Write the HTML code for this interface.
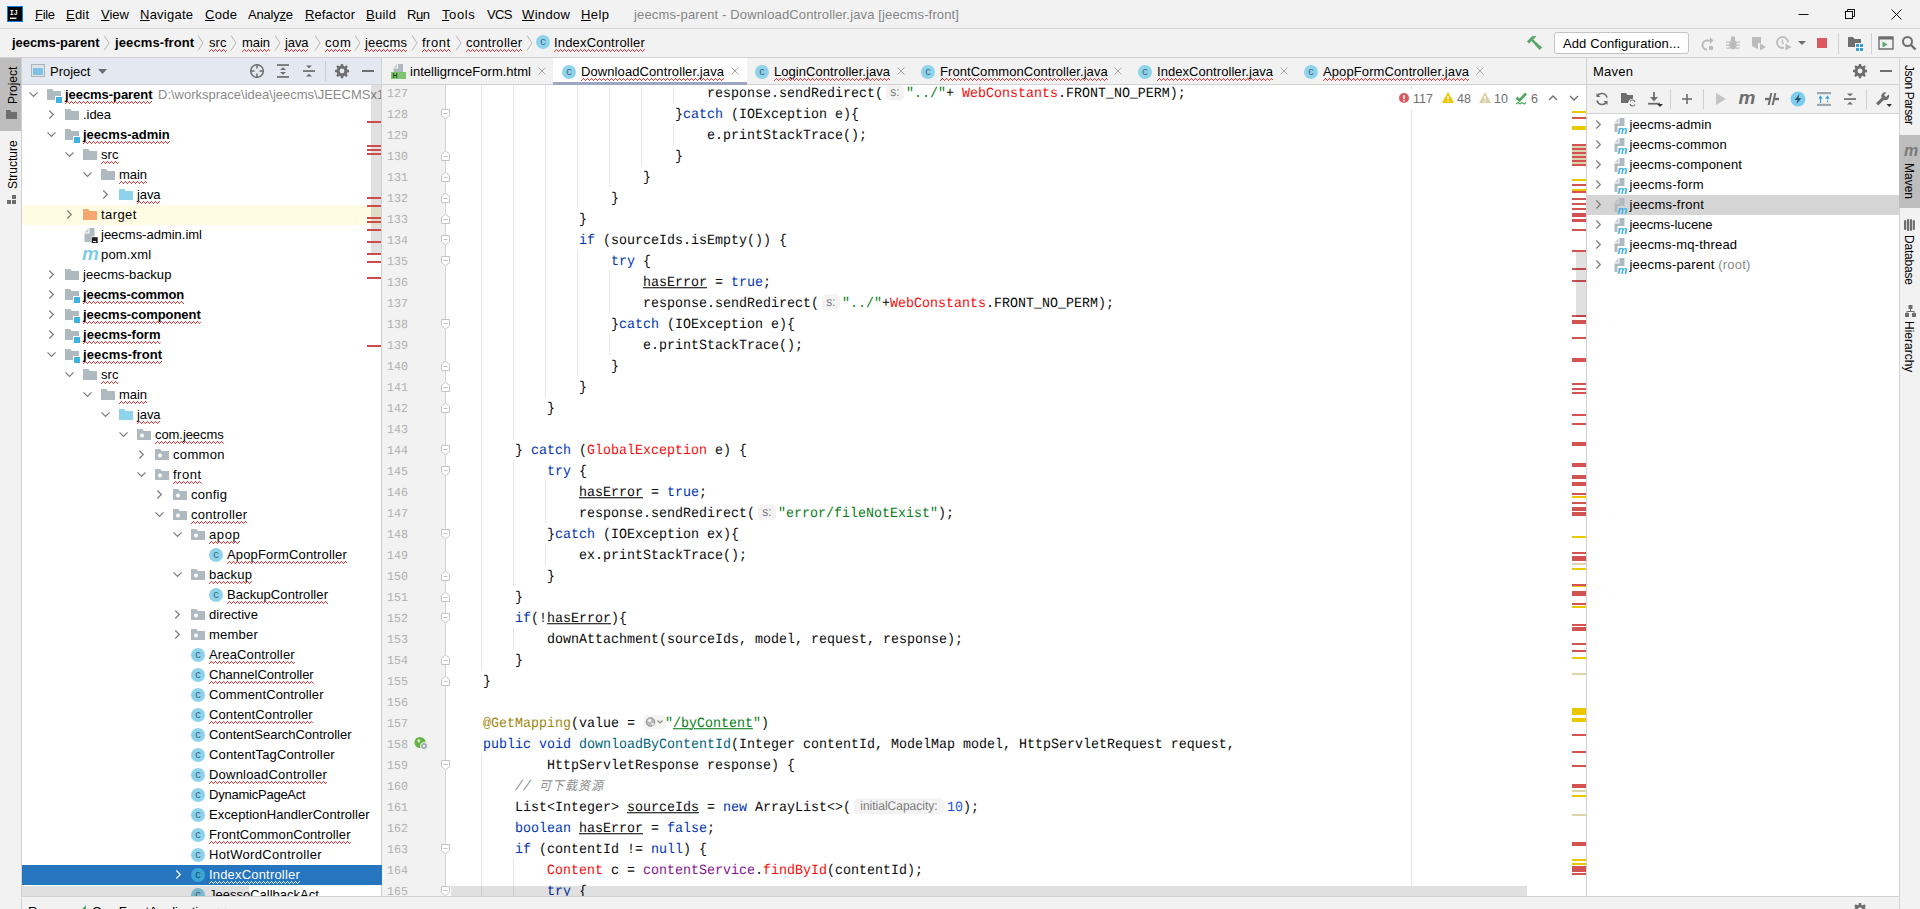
<!DOCTYPE html><html><head><meta charset="utf-8"><title>jeecms-parent</title><style>
*{box-sizing:border-box;margin:0;padding:0}
html,body{width:1920px;height:909px;overflow:hidden;background:#f2f2f2}
body{font-family:"Liberation Sans", "Noto Sans CJK SC", sans-serif;font-size:13px;color:#000;position:relative}
.abs{position:absolute}
.t{position:absolute;white-space:pre;line-height:20px;height:20px}
.b{font-weight:bold}
.w{}
.mn u{text-decoration:underline;text-underline-offset:1px}
.code{text-rendering:geometricPrecision;transform:scaleY(1.06);position:absolute;white-space:pre;font-family:"Liberation Mono", "Noto Sans CJK SC", monospace;font-size:13.333px;line-height:21px;height:21px;color:#080808;left:451px}
.ln{text-rendering:geometricPrecision;transform:scaleY(1.06);position:absolute;left:387px;font-family:"Liberation Mono", "Noto Sans CJK SC", monospace;font-size:11.667px;line-height:21px;height:21px;color:#b0b0b0;white-space:pre}
.k{color:#0033b3}.s{color:#067d17}.r{color:#f50a0a}.a{color:#9e880d}.m{color:#00627a}.f{color:#871094}.n{color:#1750eb}.c{color:#8c8c8c;font-style:italic}
.u{text-decoration:underline;text-decoration-thickness:1px;text-underline-offset:1px}
.hint{display:inline-block;font-family:"Liberation Sans", "Noto Sans CJK SC", sans-serif;font-size:12px;color:#7a7a7a;background:#f3f3f3;border-radius:4px;height:15px;line-height:15px;vertical-align:1px;text-align:center}
.row{position:absolute;left:22px;width:359px;height:20px}
</style></head><body><svg width="0" height="0" style="position:absolute"><defs><pattern id="wv" width="4" height="3" patternUnits="userSpaceOnUse"><g fill="#f23535" shape-rendering="crispEdges"><rect x="0" y="2" width="1" height="1"/><rect x="1" y="1" width="1" height="1"/><rect x="2" y="0" width="1" height="1"/><rect x="3" y="1" width="1" height="1"/></g></pattern><pattern id="wv2" width="4" height="3" patternUnits="userSpaceOnUse"><g fill="#e6eff9" shape-rendering="crispEdges"><rect x="0" y="2" width="1" height="1"/><rect x="1" y="1" width="1" height="1"/><rect x="2" y="0" width="1" height="1"/><rect x="3" y="1" width="1" height="1"/></g></pattern></defs></svg>
<div class="abs" style="left:0px;top:0px;width:1920px;height:28px;background:#f2f2f2;"></div>
<div class="abs" style="left:0px;top:28px;width:1920px;height:1px;background:#d4d4d4;"></div>
<div class="abs" style="left:0px;top:29px;width:1920px;height:28px;background:#f2f2f2;"></div>
<div class="abs" style="left:0px;top:57px;width:1920px;height:1px;background:#d1d1d1;"></div>
<svg class="abs" style="left:7px;top:6px" width="16" height="16" viewBox="0 0 16 16"><rect width="16" height="16" fill="#087cfa"/><rect x="1" y="1" width="14" height="14" fill="#000"/><rect x="3" y="11.6" width="6.5" height="1.3" fill="#fff"/><text x="2.8" y="9" font-family="Liberation Mono" font-weight="bold" font-size="7.5" textLength="8" lengthAdjust="spacingAndGlyphs" fill="#fff">IJ</text></svg>
<div class="t mn" style="left:35px;top:5px;letter-spacing:-0.318px;"><u>F</u>ile</div>
<div class="t mn" style="left:66px;top:5px;letter-spacing:0.198px;"><u>E</u>dit</div>
<div class="t mn" style="left:101px;top:5px;letter-spacing:0.016px;"><u>V</u>iew</div>
<div class="t mn" style="left:140px;top:5px;letter-spacing:0.241px;"><u>N</u>avigate</div>
<div class="t mn" style="left:205px;top:5px;letter-spacing:0.307px;"><u>C</u>ode</div>
<div class="t mn" style="left:248px;top:5px;letter-spacing:-0.208px;">Analy<u>z</u>e</div>
<div class="t mn" style="left:305px;top:5px;letter-spacing:0.123px;"><u>R</u>efactor</div>
<div class="t mn" style="left:366px;top:5px;letter-spacing:0.270px;"><u>B</u>uild</div>
<div class="t mn" style="left:407px;top:5px;letter-spacing:-0.430px;">R<u>u</u>n</div>
<div class="t mn" style="left:442px;top:5px;letter-spacing:0.600px;"><u>T</u>ools</div>
<div class="t mn" style="left:487px;top:5px;letter-spacing:-0.600px;">VCS</div>
<div class="t mn" style="left:522px;top:5px;letter-spacing:0.350px;"><u>W</u>indow</div>
<div class="t mn" style="left:581px;top:5px;letter-spacing:0.417px;"><u>H</u>elp</div>
<div class="t " style="left:634px;top:4.5px;color:#858585;letter-spacing:0.147px;">jeecms-parent - DownloadController.java [jeecms-front]</div>
<svg class="abs" style="left:1780px;top:0" width="140" height="28" viewBox="0 0 140 28" fill="none" stroke="#111" stroke-width="1"><path d="M18.5 14.5h10"/><rect x="65.5" y="11.5" width="7" height="7"/><path d="M67.500 11.500v-2h7v7h-2"/><path d="M111.500 9.500l10 10M121.500 9.500l-10 10"/></svg>
<div class="t b " style="left:12px;top:33px;letter-spacing:-0.055px;">jeecms-parent</div>
<div class="t b " style="left:115px;top:33px;letter-spacing:0.106px;">jeecms-front</div>
<div class="t w" style="left:209px;top:33px;letter-spacing:0.078px;">src<svg style="position:absolute;left:0;top:16px;width:100%;height:3px"><rect width="100%" height="3" fill="url(#wv)"/></svg></div>
<div class="t w" style="left:242px;top:33px;letter-spacing:-0.062px;">main<svg style="position:absolute;left:0;top:16px;width:100%;height:3px"><rect width="100%" height="3" fill="url(#wv)"/></svg></div>
<div class="t w" style="left:285px;top:33px;letter-spacing:-0.120px;">java<svg style="position:absolute;left:0;top:16px;width:100%;height:3px"><rect width="100%" height="3" fill="url(#wv)"/></svg></div>
<div class="t w" style="left:325px;top:33px;letter-spacing:0.600px;">com<svg style="position:absolute;left:0;top:16px;width:100%;height:3px"><rect width="100%" height="3" fill="url(#wv)"/></svg></div>
<div class="t w" style="left:365px;top:33px;letter-spacing:0.163px;">jeecms<svg style="position:absolute;left:0;top:16px;width:100%;height:3px"><rect width="100%" height="3" fill="url(#wv)"/></svg></div>
<div class="t w" style="left:422px;top:33px;letter-spacing:0.496px;">front<svg style="position:absolute;left:0;top:16px;width:100%;height:3px"><rect width="100%" height="3" fill="url(#wv)"/></svg></div>
<div class="t w" style="left:466px;top:33px;letter-spacing:0.292px;">controller<svg style="position:absolute;left:0;top:16px;width:100%;height:3px"><rect width="100%" height="3" fill="url(#wv)"/></svg></div>
<div class="t w" style="left:554px;top:33px;letter-spacing:0.182px;">IndexController<svg style="position:absolute;left:0;top:16px;width:100%;height:3px"><rect width="100%" height="3" fill="url(#wv)"/></svg></div>
<svg class="abs" style="left:103px;top:35px" width="7" height="16" viewBox="0 0 7 16" fill="none" stroke="#b4b4b4" stroke-width="1"><path d="M1 .5l5 7.5-5 7.5"/></svg>
<svg class="abs" style="left:197px;top:35px" width="7" height="16" viewBox="0 0 7 16" fill="none" stroke="#b4b4b4" stroke-width="1"><path d="M1 .5l5 7.5-5 7.5"/></svg>
<svg class="abs" style="left:230px;top:35px" width="7" height="16" viewBox="0 0 7 16" fill="none" stroke="#b4b4b4" stroke-width="1"><path d="M1 .5l5 7.5-5 7.5"/></svg>
<svg class="abs" style="left:274px;top:35px" width="7" height="16" viewBox="0 0 7 16" fill="none" stroke="#b4b4b4" stroke-width="1"><path d="M1 .5l5 7.5-5 7.5"/></svg>
<svg class="abs" style="left:314px;top:35px" width="7" height="16" viewBox="0 0 7 16" fill="none" stroke="#b4b4b4" stroke-width="1"><path d="M1 .5l5 7.5-5 7.5"/></svg>
<svg class="abs" style="left:354px;top:35px" width="7" height="16" viewBox="0 0 7 16" fill="none" stroke="#b4b4b4" stroke-width="1"><path d="M1 .5l5 7.5-5 7.5"/></svg>
<svg class="abs" style="left:411px;top:35px" width="7" height="16" viewBox="0 0 7 16" fill="none" stroke="#b4b4b4" stroke-width="1"><path d="M1 .5l5 7.5-5 7.5"/></svg>
<svg class="abs" style="left:455px;top:35px" width="7" height="16" viewBox="0 0 7 16" fill="none" stroke="#b4b4b4" stroke-width="1"><path d="M1 .5l5 7.5-5 7.5"/></svg>
<svg class="abs" style="left:526px;top:35px" width="7" height="16" viewBox="0 0 7 16" fill="none" stroke="#b4b4b4" stroke-width="1"><path d="M1 .5l5 7.5-5 7.5"/></svg>
<svg class="abs" style="left:536px;top:35px" width="14" height="14" viewBox="0 0 14 14"><circle cx="7" cy="7" r="7" fill="#8ed3ec"/><text x="7" y="10.300" text-anchor="middle" font-family="Liberation Sans" font-size="11" fill="#45687a">c</text></svg>
<div class="abs" style="left:0px;top:58px;width:21px;height:851px;background:#f2f2f2;"></div>
<div class="abs" style="left:21px;top:58px;width:1px;height:851px;background:#d1d1d1;"></div>
<div class="abs" style="left:0px;top:58px;width:21px;height:73px;background:#bdbdbd;"></div>
<div class="abs" style="left:2.500px;top:85px;width:20px;height:0"><div style="position:absolute;white-space:pre;transform:rotate(-90deg);transform-origin:0 0;left:0;top:19px;width:40px;height:20px;line-height:20px;font-size:12px">Project</div></div>
<svg class="abs" style="left:6px;top:110px" width="11" height="9" viewBox="0 0 11 9"><path d="M0 0h4l1.500 2H11v7H0z" fill="#6e6e6e"/></svg>
<div class="abs" style="left:2.500px;top:170px;width:20px;height:0"><div style="position:absolute;white-space:pre;transform:rotate(-90deg);transform-origin:0 0;left:0;top:19px;width:50px;height:20px;line-height:20px;font-size:12px">Structure</div></div>
<svg class="abs" style="left:7px;top:195px" width="9" height="9" viewBox="0 0 9 9" fill="#6e6e6e"><rect x="5" y="0" width="4" height="4"/><rect x="0" y="5" width="4" height="4"/><rect x="5" y="5" width="4" height="4"/></svg>
<div class="abs" style="left:22px;top:58px;width:359px;height:26px;background:#e4e8f0;"></div>
<div class="abs" style="left:22px;top:84px;width:359px;height:1px;background:#d1d1d1;"></div>
<div class="abs" style="left:22px;top:85px;width:359px;height:811px;background:#fff;"></div>
<div class="abs" style="left:381px;top:58px;width:1px;height:838px;background:#d1d1d1;"></div>
<svg class="abs" style="left:31px;top:64px" width="14" height="14" viewBox="0 0 14 14"><rect x="0.5" y="0.5" width="13" height="12" fill="#dfe3e8" stroke="#aab3bb"/><rect x="2" y="4" width="10" height="7" fill="#7ec3e6"/></svg>
<div class="t " style="left:50px;top:62px;">Project</div>
<svg class="abs" style="left:98px;top:69px" width="9" height="5" viewBox="0 0 9 5"><path d="M0 0h9L4.500 5z" fill="#6e6e6e"/></svg>
<div class="abs" style="left:22px;top:85px;width:359px;height:811px;overflow:hidden"><div class="abs" style="left:-22px;top:-85px">
<svg class="abs" style="left:27.5px;top:91px" width="11" height="7" viewBox="0 0 11 7" fill="none" stroke="#7a7a7a" stroke-width="1.200"><path d="M1.500 1.300l4 4L9.500 1.300"/></svg>
<svg class="abs" style="left:46px;top:87px" width="16" height="16" viewBox="0 0 16 16"><path d="M1 2h5.200l1.600 2H15v9H1z" fill="#aeb9c0"/><rect x="9" y="9" width="7" height="7" fill="#fff"/><rect x="10" y="10" width="6" height="6" fill="#3fb3e0"/></svg>
<div class="t b w" style="left:65px;top:85px;letter-spacing:-0.055px;">jeecms-parent<svg style="position:absolute;left:0;top:16px;width:100%;height:3px"><rect width="100%" height="3" fill="url(#wv)"/></svg></div>
<div class="t " style="left:158px;top:85px;color:#8a8a8a;">D:\worksprace\idea\jeecms\JEECMSx1</div>
<svg class="abs" style="left:48px;top:108.5px" width="7" height="11" viewBox="0 0 7 11" fill="none" stroke="#7a7a7a" stroke-width="1.200"><path d="M1.300 1.500l4 4L1.300 9.500"/></svg>
<svg class="abs" style="left:64px;top:107px" width="16" height="16" viewBox="0 0 16 16"><path d="M1 2h5.200l1.600 2H15v9H1z" fill="#aeb9c0"/></svg>
<div class="t " style="left:83px;top:105px;letter-spacing:-0.051px;">.idea</div>
<svg class="abs" style="left:45.5px;top:131px" width="11" height="7" viewBox="0 0 11 7" fill="none" stroke="#7a7a7a" stroke-width="1.200"><path d="M1.500 1.300l4 4L9.500 1.300"/></svg>
<svg class="abs" style="left:64px;top:127px" width="16" height="16" viewBox="0 0 16 16"><path d="M1 2h5.200l1.600 2H15v9H1z" fill="#aeb9c0"/><rect x="9" y="9" width="7" height="7" fill="#fff"/><rect x="10" y="10" width="6" height="6" fill="#3fb3e0"/></svg>
<div class="t b w" style="left:83px;top:125px;letter-spacing:0.009px;">jeecms-admin<svg style="position:absolute;left:0;top:16px;width:100%;height:3px"><rect width="100%" height="3" fill="url(#wv)"/></svg></div>
<svg class="abs" style="left:63.5px;top:151px" width="11" height="7" viewBox="0 0 11 7" fill="none" stroke="#7a7a7a" stroke-width="1.200"><path d="M1.500 1.300l4 4L9.500 1.300"/></svg>
<svg class="abs" style="left:82px;top:147px" width="16" height="16" viewBox="0 0 16 16"><path d="M1 2h5.200l1.600 2H15v9H1z" fill="#aeb9c0"/></svg>
<div class="t w" style="left:101px;top:145px;letter-spacing:0.078px;">src<svg style="position:absolute;left:0;top:16px;width:100%;height:3px"><rect width="100%" height="3" fill="url(#wv)"/></svg></div>
<svg class="abs" style="left:81.5px;top:171px" width="11" height="7" viewBox="0 0 11 7" fill="none" stroke="#7a7a7a" stroke-width="1.200"><path d="M1.500 1.300l4 4L9.500 1.300"/></svg>
<svg class="abs" style="left:100px;top:167px" width="16" height="16" viewBox="0 0 16 16"><path d="M1 2h5.200l1.600 2H15v9H1z" fill="#aeb9c0"/></svg>
<div class="t w" style="left:119px;top:165px;letter-spacing:-0.062px;">main<svg style="position:absolute;left:0;top:16px;width:100%;height:3px"><rect width="100%" height="3" fill="url(#wv)"/></svg></div>
<svg class="abs" style="left:102px;top:188.5px" width="7" height="11" viewBox="0 0 7 11" fill="none" stroke="#7a7a7a" stroke-width="1.200"><path d="M1.300 1.500l4 4L1.300 9.500"/></svg>
<svg class="abs" style="left:118px;top:187px" width="16" height="16" viewBox="0 0 16 16"><path d="M1 2h5.200l1.600 2H15v9H1z" fill="#8ed3ec"/></svg>
<div class="t w" style="left:137px;top:185px;letter-spacing:-0.120px;">java<svg style="position:absolute;left:0;top:16px;width:100%;height:3px"><rect width="100%" height="3" fill="url(#wv)"/></svg></div>
<div class="abs" style="left:22px;top:205px;width:359px;height:20px;background:#fffce3;"></div>
<svg class="abs" style="left:66px;top:208.5px" width="7" height="11" viewBox="0 0 7 11" fill="none" stroke="#7a7a7a" stroke-width="1.200"><path d="M1.300 1.500l4 4L1.300 9.500"/></svg>
<svg class="abs" style="left:82px;top:207px" width="16" height="16" viewBox="0 0 16 16"><path d="M1 2h5.200l1.600 2H15v9H1z" fill="#f4a870"/></svg>
<div class="t " style="left:101px;top:205px;letter-spacing:0.410px;">target</div>
<svg class="abs" style="left:84px;top:228px" width="16" height="16" viewBox="0 0 16 16"><path d="M5.500 0h5v14H.500V5.500h5z" fill="#aeb9c0"/><path d="M4.500 0v4.500H.500z" fill="#aeb9c0" opacity=".700"/><rect x="7" y="8.500" width="8" height="7.500" fill="#fff"/><rect x="7.700" y="9.200" width="6" height="5.800" fill="#231f20"/><rect x="9" y="13" width="3" height="1" fill="#fff"/></svg>
<div class="t " style="left:101px;top:225px;letter-spacing:-0.009px;">jeecms-admin.iml</div>
<div class="t b" style="left:82px;top:243.5px;color:#7fcbe8;font-style:italic;font-size:19px;line-height:20px">m</div>
<div class="t " style="left:101px;top:245px;letter-spacing:0.179px;">pom.xml</div>
<svg class="abs" style="left:48px;top:268.5px" width="7" height="11" viewBox="0 0 7 11" fill="none" stroke="#7a7a7a" stroke-width="1.200"><path d="M1.300 1.500l4 4L1.300 9.500"/></svg>
<svg class="abs" style="left:64px;top:267px" width="16" height="16" viewBox="0 0 16 16"><path d="M1 2h5.200l1.600 2H15v9H1z" fill="#aeb9c0"/></svg>
<div class="t " style="left:83px;top:265px;letter-spacing:0.080px;">jeecms-backup</div>
<svg class="abs" style="left:48px;top:288.5px" width="7" height="11" viewBox="0 0 7 11" fill="none" stroke="#7a7a7a" stroke-width="1.200"><path d="M1.300 1.500l4 4L1.300 9.500"/></svg>
<svg class="abs" style="left:64px;top:287px" width="16" height="16" viewBox="0 0 16 16"><path d="M1 2h5.200l1.600 2H15v9H1z" fill="#aeb9c0"/><rect x="9" y="9" width="7" height="7" fill="#fff"/><rect x="10" y="10" width="6" height="6" fill="#3fb3e0"/></svg>
<div class="t b w" style="left:83px;top:285px;letter-spacing:-0.108px;">jeecms-common<svg style="position:absolute;left:0;top:16px;width:100%;height:3px"><rect width="100%" height="3" fill="url(#wv)"/></svg></div>
<svg class="abs" style="left:48px;top:308.5px" width="7" height="11" viewBox="0 0 7 11" fill="none" stroke="#7a7a7a" stroke-width="1.200"><path d="M1.300 1.500l4 4L1.300 9.500"/></svg>
<svg class="abs" style="left:64px;top:307px" width="16" height="16" viewBox="0 0 16 16"><path d="M1 2h5.200l1.600 2H15v9H1z" fill="#aeb9c0"/><rect x="9" y="9" width="7" height="7" fill="#fff"/><rect x="10" y="10" width="6" height="6" fill="#3fb3e0"/></svg>
<div class="t b w" style="left:83px;top:305px;letter-spacing:-0.046px;">jeecms-component<svg style="position:absolute;left:0;top:16px;width:100%;height:3px"><rect width="100%" height="3" fill="url(#wv)"/></svg></div>
<svg class="abs" style="left:48px;top:328.5px" width="7" height="11" viewBox="0 0 7 11" fill="none" stroke="#7a7a7a" stroke-width="1.200"><path d="M1.300 1.500l4 4L1.300 9.500"/></svg>
<svg class="abs" style="left:64px;top:327px" width="16" height="16" viewBox="0 0 16 16"><path d="M1 2h5.200l1.600 2H15v9H1z" fill="#aeb9c0"/><rect x="9" y="9" width="7" height="7" fill="#fff"/><rect x="10" y="10" width="6" height="6" fill="#3fb3e0"/></svg>
<div class="t b w" style="left:83px;top:325px;letter-spacing:0.019px;">jeecms-form<svg style="position:absolute;left:0;top:16px;width:100%;height:3px"><rect width="100%" height="3" fill="url(#wv)"/></svg></div>
<svg class="abs" style="left:45.5px;top:351px" width="11" height="7" viewBox="0 0 11 7" fill="none" stroke="#7a7a7a" stroke-width="1.200"><path d="M1.500 1.300l4 4L9.500 1.300"/></svg>
<svg class="abs" style="left:64px;top:347px" width="16" height="16" viewBox="0 0 16 16"><path d="M1 2h5.200l1.600 2H15v9H1z" fill="#aeb9c0"/><rect x="9" y="9" width="7" height="7" fill="#fff"/><rect x="10" y="10" width="6" height="6" fill="#3fb3e0"/></svg>
<div class="t b w" style="left:83px;top:345px;letter-spacing:0.106px;">jeecms-front<svg style="position:absolute;left:0;top:16px;width:100%;height:3px"><rect width="100%" height="3" fill="url(#wv)"/></svg></div>
<svg class="abs" style="left:63.5px;top:371px" width="11" height="7" viewBox="0 0 11 7" fill="none" stroke="#7a7a7a" stroke-width="1.200"><path d="M1.500 1.300l4 4L9.500 1.300"/></svg>
<svg class="abs" style="left:82px;top:367px" width="16" height="16" viewBox="0 0 16 16"><path d="M1 2h5.200l1.600 2H15v9H1z" fill="#aeb9c0"/></svg>
<div class="t w" style="left:101px;top:365px;letter-spacing:0.078px;">src<svg style="position:absolute;left:0;top:16px;width:100%;height:3px"><rect width="100%" height="3" fill="url(#wv)"/></svg></div>
<svg class="abs" style="left:81.5px;top:391px" width="11" height="7" viewBox="0 0 11 7" fill="none" stroke="#7a7a7a" stroke-width="1.200"><path d="M1.500 1.300l4 4L9.500 1.300"/></svg>
<svg class="abs" style="left:100px;top:387px" width="16" height="16" viewBox="0 0 16 16"><path d="M1 2h5.200l1.600 2H15v9H1z" fill="#aeb9c0"/></svg>
<div class="t w" style="left:119px;top:385px;letter-spacing:-0.062px;">main<svg style="position:absolute;left:0;top:16px;width:100%;height:3px"><rect width="100%" height="3" fill="url(#wv)"/></svg></div>
<svg class="abs" style="left:99.5px;top:411px" width="11" height="7" viewBox="0 0 11 7" fill="none" stroke="#7a7a7a" stroke-width="1.200"><path d="M1.500 1.300l4 4L9.500 1.300"/></svg>
<svg class="abs" style="left:118px;top:407px" width="16" height="16" viewBox="0 0 16 16"><path d="M1 2h5.200l1.600 2H15v9H1z" fill="#8ed3ec"/></svg>
<div class="t w" style="left:137px;top:405px;letter-spacing:-0.120px;">java<svg style="position:absolute;left:0;top:16px;width:100%;height:3px"><rect width="100%" height="3" fill="url(#wv)"/></svg></div>
<svg class="abs" style="left:117.5px;top:431px" width="11" height="7" viewBox="0 0 11 7" fill="none" stroke="#7a7a7a" stroke-width="1.200"><path d="M1.500 1.300l4 4L9.500 1.300"/></svg>
<svg class="abs" style="left:136px;top:427px" width="16" height="16" viewBox="0 0 16 16"><path d="M1 2h5.200l1.600 2H15v9H1z" fill="#aeb9c0"/><circle cx="6" cy="8.600" r="2" fill="#fff"/></svg>
<div class="t w" style="left:155px;top:425px;letter-spacing:-0.073px;">com.jeecms<svg style="position:absolute;left:0;top:16px;width:100%;height:3px"><rect width="100%" height="3" fill="url(#wv)"/></svg></div>
<svg class="abs" style="left:138px;top:448.5px" width="7" height="11" viewBox="0 0 7 11" fill="none" stroke="#7a7a7a" stroke-width="1.200"><path d="M1.300 1.500l4 4L1.300 9.500"/></svg>
<svg class="abs" style="left:154px;top:447px" width="16" height="16" viewBox="0 0 16 16"><path d="M1 2h5.200l1.600 2H15v9H1z" fill="#aeb9c0"/><circle cx="6" cy="8.600" r="2" fill="#fff"/></svg>
<div class="t " style="left:173px;top:445px;letter-spacing:0.328px;">common</div>
<svg class="abs" style="left:135.5px;top:471px" width="11" height="7" viewBox="0 0 11 7" fill="none" stroke="#7a7a7a" stroke-width="1.200"><path d="M1.500 1.300l4 4L9.500 1.300"/></svg>
<svg class="abs" style="left:154px;top:467px" width="16" height="16" viewBox="0 0 16 16"><path d="M1 2h5.200l1.600 2H15v9H1z" fill="#aeb9c0"/><circle cx="6" cy="8.600" r="2" fill="#fff"/></svg>
<div class="t w" style="left:173px;top:465px;letter-spacing:0.496px;">front<svg style="position:absolute;left:0;top:16px;width:100%;height:3px"><rect width="100%" height="3" fill="url(#wv)"/></svg></div>
<svg class="abs" style="left:156px;top:488.5px" width="7" height="11" viewBox="0 0 7 11" fill="none" stroke="#7a7a7a" stroke-width="1.200"><path d="M1.300 1.500l4 4L1.300 9.500"/></svg>
<svg class="abs" style="left:172px;top:487px" width="16" height="16" viewBox="0 0 16 16"><path d="M1 2h5.200l1.600 2H15v9H1z" fill="#aeb9c0"/><circle cx="6" cy="8.600" r="2" fill="#fff"/></svg>
<div class="t " style="left:191px;top:485px;letter-spacing:0.259px;">config</div>
<svg class="abs" style="left:153.5px;top:511px" width="11" height="7" viewBox="0 0 11 7" fill="none" stroke="#7a7a7a" stroke-width="1.200"><path d="M1.500 1.300l4 4L9.500 1.300"/></svg>
<svg class="abs" style="left:172px;top:507px" width="16" height="16" viewBox="0 0 16 16"><path d="M1 2h5.200l1.600 2H15v9H1z" fill="#aeb9c0"/><circle cx="6" cy="8.600" r="2" fill="#fff"/></svg>
<div class="t w" style="left:191px;top:505px;letter-spacing:0.292px;">controller<svg style="position:absolute;left:0;top:16px;width:100%;height:3px"><rect width="100%" height="3" fill="url(#wv)"/></svg></div>
<svg class="abs" style="left:171.5px;top:531px" width="11" height="7" viewBox="0 0 11 7" fill="none" stroke="#7a7a7a" stroke-width="1.200"><path d="M1.500 1.300l4 4L9.500 1.300"/></svg>
<svg class="abs" style="left:190px;top:527px" width="16" height="16" viewBox="0 0 16 16"><path d="M1 2h5.200l1.600 2H15v9H1z" fill="#aeb9c0"/><circle cx="6" cy="8.600" r="2" fill="#fff"/></svg>
<div class="t w" style="left:209px;top:525px;letter-spacing:0.600px;">apop<svg style="position:absolute;left:0;top:16px;width:100%;height:3px"><rect width="100%" height="3" fill="url(#wv)"/></svg></div>
<svg class="abs" style="left:209px;top:548px" width="14" height="14" viewBox="0 0 14 14"><circle cx="7" cy="7" r="7" fill="#8ed3ec"/><text x="7" y="10.300" text-anchor="middle" font-family="Liberation Sans" font-size="11" fill="#45687a">c</text></svg>
<div class="t w" style="left:227px;top:545px;letter-spacing:0.162px;">ApopFormController<svg style="position:absolute;left:0;top:16px;width:100%;height:3px"><rect width="100%" height="3" fill="url(#wv)"/></svg></div>
<svg class="abs" style="left:171.5px;top:571px" width="11" height="7" viewBox="0 0 11 7" fill="none" stroke="#7a7a7a" stroke-width="1.200"><path d="M1.500 1.300l4 4L9.500 1.300"/></svg>
<svg class="abs" style="left:190px;top:567px" width="16" height="16" viewBox="0 0 16 16"><path d="M1 2h5.200l1.600 2H15v9H1z" fill="#aeb9c0"/><circle cx="6" cy="8.600" r="2" fill="#fff"/></svg>
<div class="t w" style="left:209px;top:565px;letter-spacing:0.196px;">backup<svg style="position:absolute;left:0;top:16px;width:100%;height:3px"><rect width="100%" height="3" fill="url(#wv)"/></svg></div>
<svg class="abs" style="left:209px;top:588px" width="14" height="14" viewBox="0 0 14 14"><circle cx="7" cy="7" r="7" fill="#8ed3ec"/><text x="7" y="10.300" text-anchor="middle" font-family="Liberation Sans" font-size="11" fill="#45687a">c</text></svg>
<div class="t w" style="left:227px;top:585px;letter-spacing:0.085px;">BackupController<svg style="position:absolute;left:0;top:16px;width:100%;height:3px"><rect width="100%" height="3" fill="url(#wv)"/></svg></div>
<svg class="abs" style="left:174px;top:608.5px" width="7" height="11" viewBox="0 0 7 11" fill="none" stroke="#7a7a7a" stroke-width="1.200"><path d="M1.300 1.500l4 4L1.300 9.500"/></svg>
<svg class="abs" style="left:190px;top:607px" width="16" height="16" viewBox="0 0 16 16"><path d="M1 2h5.200l1.600 2H15v9H1z" fill="#aeb9c0"/><circle cx="6" cy="8.600" r="2" fill="#fff"/></svg>
<div class="t " style="left:209px;top:605px;letter-spacing:0.060px;">directive</div>
<svg class="abs" style="left:174px;top:628.5px" width="7" height="11" viewBox="0 0 7 11" fill="none" stroke="#7a7a7a" stroke-width="1.200"><path d="M1.300 1.500l4 4L1.300 9.500"/></svg>
<svg class="abs" style="left:190px;top:627px" width="16" height="16" viewBox="0 0 16 16"><path d="M1 2h5.200l1.600 2H15v9H1z" fill="#aeb9c0"/><circle cx="6" cy="8.600" r="2" fill="#fff"/></svg>
<div class="t " style="left:209px;top:625px;letter-spacing:0.242px;">member</div>
<svg class="abs" style="left:191px;top:648px" width="14" height="14" viewBox="0 0 14 14"><circle cx="7" cy="7" r="7" fill="#8ed3ec"/><text x="7" y="10.300" text-anchor="middle" font-family="Liberation Sans" font-size="11" fill="#45687a">c</text></svg>
<div class="t w" style="left:209px;top:645px;letter-spacing:0.136px;">AreaController<svg style="position:absolute;left:0;top:16px;width:100%;height:3px"><rect width="100%" height="3" fill="url(#wv)"/></svg></div>
<svg class="abs" style="left:191px;top:668px" width="14" height="14" viewBox="0 0 14 14"><circle cx="7" cy="7" r="7" fill="#8ed3ec"/><text x="7" y="10.300" text-anchor="middle" font-family="Liberation Sans" font-size="11" fill="#45687a">c</text></svg>
<div class="t w" style="left:209px;top:665px;letter-spacing:-0.005px;">ChannelController<svg style="position:absolute;left:0;top:16px;width:100%;height:3px"><rect width="100%" height="3" fill="url(#wv)"/></svg></div>
<svg class="abs" style="left:191px;top:688px" width="14" height="14" viewBox="0 0 14 14"><circle cx="7" cy="7" r="7" fill="#8ed3ec"/><text x="7" y="10.300" text-anchor="middle" font-family="Liberation Sans" font-size="11" fill="#45687a">c</text></svg>
<div class="t " style="left:209px;top:685px;letter-spacing:0.112px;">CommentController</div>
<svg class="abs" style="left:191px;top:708px" width="14" height="14" viewBox="0 0 14 14"><circle cx="7" cy="7" r="7" fill="#8ed3ec"/><text x="7" y="10.300" text-anchor="middle" font-family="Liberation Sans" font-size="11" fill="#45687a">c</text></svg>
<div class="t w" style="left:209px;top:705px;letter-spacing:0.113px;">ContentController<svg style="position:absolute;left:0;top:16px;width:100%;height:3px"><rect width="100%" height="3" fill="url(#wv)"/></svg></div>
<svg class="abs" style="left:191px;top:728px" width="14" height="14" viewBox="0 0 14 14"><circle cx="7" cy="7" r="7" fill="#8ed3ec"/><text x="7" y="10.300" text-anchor="middle" font-family="Liberation Sans" font-size="11" fill="#45687a">c</text></svg>
<div class="t " style="left:209px;top:725px;letter-spacing:-0.026px;">ContentSearchController</div>
<svg class="abs" style="left:191px;top:748px" width="14" height="14" viewBox="0 0 14 14"><circle cx="7" cy="7" r="7" fill="#8ed3ec"/><text x="7" y="10.300" text-anchor="middle" font-family="Liberation Sans" font-size="11" fill="#45687a">c</text></svg>
<div class="t " style="left:209px;top:745px;letter-spacing:0.144px;">ContentTagController</div>
<svg class="abs" style="left:191px;top:768px" width="14" height="14" viewBox="0 0 14 14"><circle cx="7" cy="7" r="7" fill="#8ed3ec"/><text x="7" y="10.300" text-anchor="middle" font-family="Liberation Sans" font-size="11" fill="#45687a">c</text></svg>
<div class="t w" style="left:209px;top:765px;letter-spacing:0.208px;">DownloadController<svg style="position:absolute;left:0;top:16px;width:100%;height:3px"><rect width="100%" height="3" fill="url(#wv)"/></svg></div>
<svg class="abs" style="left:191px;top:788px" width="14" height="14" viewBox="0 0 14 14"><circle cx="7" cy="7" r="7" fill="#8ed3ec"/><text x="7" y="10.300" text-anchor="middle" font-family="Liberation Sans" font-size="11" fill="#45687a">c</text></svg>
<div class="t " style="left:209px;top:785px;letter-spacing:-0.232px;">DynamicPageAct</div>
<svg class="abs" style="left:191px;top:808px" width="14" height="14" viewBox="0 0 14 14"><circle cx="7" cy="7" r="7" fill="#8ed3ec"/><text x="7" y="10.300" text-anchor="middle" font-family="Liberation Sans" font-size="11" fill="#45687a">c</text></svg>
<div class="t " style="left:209px;top:805px;letter-spacing:0.065px;">ExceptionHandlerController</div>
<svg class="abs" style="left:191px;top:828px" width="14" height="14" viewBox="0 0 14 14"><circle cx="7" cy="7" r="7" fill="#8ed3ec"/><text x="7" y="10.300" text-anchor="middle" font-family="Liberation Sans" font-size="11" fill="#45687a">c</text></svg>
<div class="t w" style="left:209px;top:825px;letter-spacing:0.103px;">FrontCommonController<svg style="position:absolute;left:0;top:16px;width:100%;height:3px"><rect width="100%" height="3" fill="url(#wv)"/></svg></div>
<svg class="abs" style="left:191px;top:848px" width="14" height="14" viewBox="0 0 14 14"><circle cx="7" cy="7" r="7" fill="#8ed3ec"/><text x="7" y="10.300" text-anchor="middle" font-family="Liberation Sans" font-size="11" fill="#45687a">c</text></svg>
<div class="t " style="left:209px;top:845px;letter-spacing:0.324px;">HotWordController</div>
<div class="abs" style="left:22px;top:865px;width:359px;height:20px;background:#2675bf;"></div>
<svg class="abs" style="left:175px;top:868.5px" width="7" height="11" viewBox="0 0 7 11" fill="none" stroke="#fff" stroke-width="1.200"><path d="M1.300 1.500l4 4L1.300 9.500"/></svg>
<svg class="abs" style="left:191px;top:868px" width="14" height="14" viewBox="0 0 14 14"><circle cx="7" cy="7" r="7" fill="#3ba7d6"/><text x="7" y="10.300" text-anchor="middle" font-family="Liberation Sans" font-size="11" fill="#1d4e66">c</text></svg>
<div class="t w" style="left:209px;top:865px;color:#fff;text-decoration-color:#a8c8e8;letter-spacing:0.182px;">IndexController<svg style="position:absolute;left:0;top:16px;width:100%;height:3px"><rect width="100%" height="3" fill="url(#wv2)"/></svg></div>
<svg class="abs" style="left:191px;top:888px" width="14" height="14" viewBox="0 0 14 14"><circle cx="7" cy="7" r="7" fill="#8ed3ec"/><text x="7" y="10.300" text-anchor="middle" font-family="Liberation Sans" font-size="11" fill="#45687a">c</text></svg>
<div class="t " style="left:209px;top:885px;">JeessoCallbackAct</div>
</div></div>
<div class="abs" style="left:371px;top:85px;width:10px;height:169px;background:rgba(0,0,0,0.12);"></div>
<div class="abs" style="left:367px;top:121px;width:14px;height:2px;background:#cf4b4b;"></div>
<div class="abs" style="left:367px;top:145px;width:14px;height:2px;background:#cf4b4b;"></div>
<div class="abs" style="left:367px;top:149px;width:14px;height:2px;background:#cf4b4b;"></div>
<div class="abs" style="left:367px;top:153px;width:14px;height:2px;background:#cf4b4b;"></div>
<div class="abs" style="left:367px;top:197px;width:14px;height:2px;background:#cf4b4b;"></div>
<div class="abs" style="left:367px;top:205px;width:14px;height:2px;background:#cf4b4b;"></div>
<div class="abs" style="left:367px;top:217px;width:14px;height:2px;background:#cf4b4b;"></div>
<div class="abs" style="left:367px;top:221px;width:14px;height:2px;background:#cf4b4b;"></div>
<div class="abs" style="left:367px;top:229px;width:14px;height:2px;background:#cf4b4b;"></div>
<div class="abs" style="left:367px;top:241px;width:14px;height:2px;background:#cf4b4b;"></div>
<div class="abs" style="left:367px;top:253px;width:14px;height:2px;background:#cf4b4b;"></div>
<div class="abs" style="left:367px;top:261px;width:14px;height:2px;background:#cf4b4b;"></div>
<div class="abs" style="left:367px;top:277px;width:14px;height:2px;background:#cf4b4b;"></div>
<div class="abs" style="left:367px;top:345px;width:14px;height:2px;background:#cf4b4b;"></div>
<div class="abs" style="left:22px;top:886px;width:227px;height:10px;background:rgba(0,0,0,0.12);"></div>
<div class="abs" style="left:22px;top:896px;width:1877px;height:1px;background:#d1d1d1;"></div>
<div class="abs" style="left:22px;top:897px;width:1877px;height:12px;background:#f2f2f2;"></div>
<svg class="abs" style="left:249px;top:63px" width="16" height="16" viewBox="0 0 16 16" fill="none" stroke="#6e6e6e" stroke-width="1.500"><circle cx="8" cy="8" r="6.300"/><path d="M8 1.500v4M8 10.500v4M1.500 8h4M10.500 8h4"/></svg>
<svg class="abs" style="left:275px;top:63px" width="16" height="16" viewBox="0 0 16 16" fill="#6e6e6e"><rect x="2" y="1.200" width="12" height="1.700"/><rect x="2" y="13.100" width="12" height="1.700"/><path d="M8 4.300l3 2.800H5zM8 11.700l3-2.800H5z"/></svg>
<svg class="abs" style="left:301px;top:63px" width="16" height="16" viewBox="0 0 16 16" fill="#6e6e6e"><rect x="2" y="7.200" width="12" height="1.700"/><path d="M8 5.300l3-2.800H5zM8 10.700l3 2.800H5z"/></svg>
<div class="abs" style="left:325px;top:61px;width:1px;height:20px;background:#c8ccd4;"></div>
<svg class="abs" style="left:334px;top:63px" width="16" height="16" viewBox="0 0 16 16"><path fill="#6e6e6e" fill-rule="evenodd" d="M6.900 1h2.200l.4 1.900 1.200.5 1.600-1.100 1.500 1.500-1.100 1.600.5 1.200 1.900.4v2.200l-1.900.4-.5 1.200 1.100 1.600-1.500 1.500-1.600-1.100-1.200.5-.4 1.900H6.900l-.4-1.900-1.200-.5-1.600 1.100-1.500-1.500 1.100-1.600-.5-1.200L1 9.100V6.900l1.900-.4.500-1.200-1.100-1.600 1.500-1.500 1.600 1.100 1.200-.5zM8 5.600a2.400 2.400 0 100 4.800 2.400 2.400 0 000-4.800z"/></svg>
<div class="abs" style="left:362px;top:70px;width:12px;height:2px;background:#6e6e6e;"></div>
<div class="abs" style="left:382px;top:58px;width:1204px;height:26px;background:#f2f2f2;"></div>
<div class="abs" style="left:382px;top:84px;width:1204px;height:1px;background:#d1d1d1;"></div>
<div class="abs" style="left:382px;top:85px;width:1204px;height:811px;background:#fff;"></div>
<div class="abs" style="left:1586px;top:58px;width:1px;height:838px;background:#d1d1d1;"></div>
<div class="abs" style="left:553px;top:58px;width:194px;height:26px;background:#fff;"></div>
<div class="abs" style="left:553px;top:82px;width:194px;height:3px;background:#9ba7c4;"></div>
<svg class="abs" style="left:390px;top:63px" width="16" height="16" viewBox="0 0 16 16"><path d="M8 1h5v8H3.500V5.500H8z" fill="#aeb9c0"/><path d="M7 1v3.500H3.500z" fill="#aeb9c0" opacity=".700"/><rect x="1" y="9" width="15" height="7" fill="#7fc470"/><text x="2.500" y="15.300" font-family="Liberation Sans" font-weight="bold" font-size="7" fill="#1f4d18">H</text></svg>
<div class="t " style="left:410px;top:62px;letter-spacing:0.017px;">intelligrnceForm.html</div>
<svg class="abs" style="left:538px;top:67px" width="8" height="8" viewBox="0 0 8 8" stroke="#a8a8a8" stroke-width="1"><path d="M.500 .500l7 7M7.500 .500l-7 7"/></svg>
<svg class="abs" style="left:562px;top:65px" width="14" height="14" viewBox="0 0 14 14"><circle cx="7" cy="7" r="7" fill="#8ed3ec"/><text x="7" y="10.300" text-anchor="middle" font-family="Liberation Sans" font-size="11" fill="#45687a">c</text></svg>
<div class="t w" style="left:581px;top:62px;letter-spacing:0.094px;">DownloadController.java<svg style="position:absolute;left:0;top:16px;width:100%;height:3px"><rect width="100%" height="3" fill="url(#wv)"/></svg></div>
<svg class="abs" style="left:731px;top:67px" width="8" height="8" viewBox="0 0 8 8" stroke="#a8a8a8" stroke-width="1"><path d="M.500 .500l7 7M7.500 .500l-7 7"/></svg>
<svg class="abs" style="left:755px;top:65px" width="14" height="14" viewBox="0 0 14 14"><circle cx="7" cy="7" r="7" fill="#8ed3ec"/><text x="7" y="10.300" text-anchor="middle" font-family="Liberation Sans" font-size="11" fill="#45687a">c</text></svg>
<div class="t w" style="left:774px;top:62px;letter-spacing:0.058px;">LoginController.java<svg style="position:absolute;left:0;top:16px;width:100%;height:3px"><rect width="100%" height="3" fill="url(#wv)"/></svg></div>
<svg class="abs" style="left:897px;top:67px" width="8" height="8" viewBox="0 0 8 8" stroke="#a8a8a8" stroke-width="1"><path d="M.500 .500l7 7M7.500 .500l-7 7"/></svg>
<svg class="abs" style="left:921px;top:65px" width="14" height="14" viewBox="0 0 14 14"><circle cx="7" cy="7" r="7" fill="#8ed3ec"/><text x="7" y="10.300" text-anchor="middle" font-family="Liberation Sans" font-size="11" fill="#45687a">c</text></svg>
<div class="t w" style="left:940px;top:62px;letter-spacing:0.060px;">FrontCommonController.java<svg style="position:absolute;left:0;top:16px;width:100%;height:3px"><rect width="100%" height="3" fill="url(#wv)"/></svg></div>
<svg class="abs" style="left:1114px;top:67px" width="8" height="8" viewBox="0 0 8 8" stroke="#a8a8a8" stroke-width="1"><path d="M.500 .500l7 7M7.500 .500l-7 7"/></svg>
<svg class="abs" style="left:1138px;top:65px" width="14" height="14" viewBox="0 0 14 14"><circle cx="7" cy="7" r="7" fill="#8ed3ec"/><text x="7" y="10.300" text-anchor="middle" font-family="Liberation Sans" font-size="11" fill="#45687a">c</text></svg>
<div class="t w" style="left:1157px;top:62px;letter-spacing:0.058px;">IndexController.java<svg style="position:absolute;left:0;top:16px;width:100%;height:3px"><rect width="100%" height="3" fill="url(#wv)"/></svg></div>
<svg class="abs" style="left:1280px;top:67px" width="8" height="8" viewBox="0 0 8 8" stroke="#a8a8a8" stroke-width="1"><path d="M.500 .500l7 7M7.500 .500l-7 7"/></svg>
<svg class="abs" style="left:1304px;top:65px" width="14" height="14" viewBox="0 0 14 14"><circle cx="7" cy="7" r="7" fill="#8ed3ec"/><text x="7" y="10.300" text-anchor="middle" font-family="Liberation Sans" font-size="11" fill="#45687a">c</text></svg>
<div class="t w" style="left:1323px;top:62px;letter-spacing:0.100px;">ApopFormController.java<svg style="position:absolute;left:0;top:16px;width:100%;height:3px"><rect width="100%" height="3" fill="url(#wv)"/></svg></div>
<svg class="abs" style="left:1476px;top:67px" width="8" height="8" viewBox="0 0 8 8" stroke="#a8a8a8" stroke-width="1"><path d="M.500 .500l7 7M7.500 .500l-7 7"/></svg>
<div class="abs" style="left:382px;top:85px;width:63px;height:811px;background:#f2f2f2;"></div>
<div class="abs" style="left:445px;top:85px;width:1px;height:811px;background:#d4d4d4;"></div>
<div class="abs" style="left:1411px;top:110px;width:1px;height:776px;background:#e3e3e3;"></div>
<div class="abs" style="left:1411px;top:85px;width:1px;height:4px;background:#e3e3e3;"></div>
<div class="abs" style="left:382px;top:85px;width:1204px;height:811px;overflow:hidden"><div class="abs" style="left:-382px;top:-85px">
<div class="abs" style="left:481px;top:82px;width:1px;height:588px;background:#e6e6e6;"></div>
<div class="abs" style="left:481px;top:754px;width:1px;height:168px;background:#e6e6e6;"></div>
<div class="abs" style="left:513px;top:82px;width:1px;height:357px;background:#e6e6e6;"></div>
<div class="abs" style="left:513px;top:460px;width:1px;height:126px;background:#e6e6e6;"></div>
<div class="abs" style="left:513px;top:628px;width:1px;height:21px;background:#e6e6e6;"></div>
<div class="abs" style="left:513px;top:859px;width:1px;height:63px;background:#e6e6e6;"></div>
<div class="abs" style="left:545px;top:82px;width:1px;height:315px;background:#e6e6e6;"></div>
<div class="abs" style="left:545px;top:481px;width:1px;height:42px;background:#e6e6e6;"></div>
<div class="abs" style="left:545px;top:544px;width:1px;height:21px;background:#e6e6e6;"></div>
<div class="abs" style="left:577px;top:82px;width:1px;height:126px;background:#e6e6e6;"></div>
<div class="abs" style="left:577px;top:250px;width:1px;height:126px;background:#e6e6e6;"></div>
<div class="abs" style="left:609px;top:82px;width:1px;height:105px;background:#e6e6e6;"></div>
<div class="abs" style="left:609px;top:271px;width:1px;height:42px;background:#e6e6e6;"></div>
<div class="abs" style="left:609px;top:334px;width:1px;height:21px;background:#e6e6e6;"></div>
<div class="abs" style="left:641px;top:82px;width:1px;height:84px;background:#e6e6e6;"></div>
<div class="abs" style="left:673px;top:82px;width:1px;height:21px;background:#e6e6e6;"></div>
<div class="abs" style="left:673px;top:124px;width:1px;height:21px;background:#e6e6e6;"></div>
<div class="ln" style="top:84px">127</div>
<div class="code" style="top:84px">                                response.sendRedirect(<span class="hint" style="width:18px;margin:0 2px 0 3px">s:</span><span class="s">&quot;../&quot;</span>+ <span class="r">WebConstants</span>.FRONT_NO_PERM);</div>
<div class="ln" style="top:105px">128</div>
<div class="code" style="top:105px">                            }<span class="k">catch</span> (IOException e){</div>
<div class="ln" style="top:126px">129</div>
<div class="code" style="top:126px">                                e.printStackTrace();</div>
<div class="ln" style="top:147px">130</div>
<div class="code" style="top:147px">                            }</div>
<div class="ln" style="top:168px">131</div>
<div class="code" style="top:168px">                        }</div>
<div class="ln" style="top:189px">132</div>
<div class="code" style="top:189px">                    }</div>
<div class="ln" style="top:210px">133</div>
<div class="code" style="top:210px">                }</div>
<div class="ln" style="top:231px">134</div>
<div class="code" style="top:231px">                <span class="k">if</span> (sourceIds.isEmpty()) {</div>
<div class="ln" style="top:252px">135</div>
<div class="code" style="top:252px">                    <span class="k">try</span> {</div>
<div class="ln" style="top:273px">136</div>
<div class="code" style="top:273px">                        <span class="u">hasError</span> = <span class="k">true</span>;</div>
<div class="ln" style="top:294px">137</div>
<div class="code" style="top:294px">                        response.sendRedirect(<span class="hint" style="width:18px;margin:0 2px 0 3px">s:</span><span class="s">&quot;../&quot;</span>+<span class="r">WebConstants</span>.FRONT_NO_PERM);</div>
<div class="ln" style="top:315px">138</div>
<div class="code" style="top:315px">                    }<span class="k">catch</span> (IOException e){</div>
<div class="ln" style="top:336px">139</div>
<div class="code" style="top:336px">                        e.printStackTrace();</div>
<div class="ln" style="top:357px">140</div>
<div class="code" style="top:357px">                    }</div>
<div class="ln" style="top:378px">141</div>
<div class="code" style="top:378px">                }</div>
<div class="ln" style="top:399px">142</div>
<div class="code" style="top:399px">            }</div>
<div class="ln" style="top:420px">143</div>
<div class="ln" style="top:441px">144</div>
<div class="code" style="top:441px">        } <span class="k">catch</span> (<span class="r">GlobalException</span> e) {</div>
<div class="ln" style="top:462px">145</div>
<div class="code" style="top:462px">            <span class="k">try</span> {</div>
<div class="ln" style="top:483px">146</div>
<div class="code" style="top:483px">                <span class="u">hasError</span> = <span class="k">true</span>;</div>
<div class="ln" style="top:504px">147</div>
<div class="code" style="top:504px">                response.sendRedirect(<span class="hint" style="width:18px;margin:0 2px 0 3px">s:</span><span class="s">&quot;error/fileNotExist&quot;</span>);</div>
<div class="ln" style="top:525px">148</div>
<div class="code" style="top:525px">            }<span class="k">catch</span> (IOException ex){</div>
<div class="ln" style="top:546px">149</div>
<div class="code" style="top:546px">                ex.printStackTrace();</div>
<div class="ln" style="top:567px">150</div>
<div class="code" style="top:567px">            }</div>
<div class="ln" style="top:588px">151</div>
<div class="code" style="top:588px">        }</div>
<div class="ln" style="top:609px">152</div>
<div class="code" style="top:609px">        <span class="k">if</span>(!<span class="u">hasError</span>){</div>
<div class="ln" style="top:630px">153</div>
<div class="code" style="top:630px">            downAttachment(sourceIds, model, request, response);</div>
<div class="ln" style="top:651px">154</div>
<div class="code" style="top:651px">        }</div>
<div class="ln" style="top:672px">155</div>
<div class="code" style="top:672px">    }</div>
<div class="ln" style="top:693px">156</div>
<div class="ln" style="top:714px">157</div>
<div class="code" style="top:714px">    <span class="a">@GetMapping</span>(value = <span style="display:inline-block;width:22px"></span><span class="s">&quot;</span><span class="s u">/byContent</span><span class="s">&quot;</span>)</div>
<div class="ln" style="top:735px">158</div>
<div class="code" style="top:735px">    <span class="k">public</span> <span class="k">void</span> <span class="m">downloadByContentId</span>(Integer contentId, ModelMap model, HttpServletRequest request,</div>
<div class="ln" style="top:756px">159</div>
<div class="code" style="top:756px">            HttpServletResponse response) {</div>
<div class="ln" style="top:777px">160</div>
<div class="code" style="top:777px">        <span class="c">// <span style="font-size:12px;letter-spacing:1px">可下载资源</span></span></div>
<div class="ln" style="top:798px">161</div>
<div class="code" style="top:798px">        List&lt;Integer&gt; <span class="u">sourceIds</span> = <span class="k">new</span> ArrayList&lt;&gt;(<span class="hint" style="width:90px;margin:0 3px 0 3px">initialCapacity:</span><span class="n">10</span>);</div>
<div class="ln" style="top:819px">162</div>
<div class="code" style="top:819px">        <span class="k">boolean</span> <span class="u">hasError</span> = <span class="k">false</span>;</div>
<div class="ln" style="top:840px">163</div>
<div class="code" style="top:840px">        <span class="k">if</span> (contentId != <span class="k">null</span>) {</div>
<div class="ln" style="top:861px">164</div>
<div class="code" style="top:861px">            <span class="r">Content</span> c = <span class="f">contentService</span>.<span class="r">findById</span>(contentId);</div>
<div class="ln" style="top:882px">165</div>
<div class="code" style="top:882px">            <span class="k">try</span> {</div>
<svg class="abs" style="left:441px;top:108.5px" width="9" height="10" viewBox="0 0 9 10"><path d="M.500 .500h8v6l-4 3.500-4-3.500z" fill="#fff" stroke="#c4c4c4"/><path d="M2.500 4.5h4" stroke="#c4c4c4"/></svg>
<svg class="abs" style="left:441px;top:234.5px" width="9" height="10" viewBox="0 0 9 10"><path d="M.500 .500h8v6l-4 3.500-4-3.500z" fill="#fff" stroke="#c4c4c4"/><path d="M2.500 4.5h4" stroke="#c4c4c4"/></svg>
<svg class="abs" style="left:441px;top:255.5px" width="9" height="10" viewBox="0 0 9 10"><path d="M.500 .500h8v6l-4 3.500-4-3.500z" fill="#fff" stroke="#c4c4c4"/><path d="M2.500 4.5h4" stroke="#c4c4c4"/></svg>
<svg class="abs" style="left:441px;top:318.5px" width="9" height="10" viewBox="0 0 9 10"><path d="M.500 .500h8v6l-4 3.500-4-3.500z" fill="#fff" stroke="#c4c4c4"/><path d="M2.500 4.5h4" stroke="#c4c4c4"/></svg>
<svg class="abs" style="left:441px;top:444.5px" width="9" height="10" viewBox="0 0 9 10"><path d="M.500 .500h8v6l-4 3.500-4-3.500z" fill="#fff" stroke="#c4c4c4"/><path d="M2.500 4.5h4" stroke="#c4c4c4"/></svg>
<svg class="abs" style="left:441px;top:465.5px" width="9" height="10" viewBox="0 0 9 10"><path d="M.500 .500h8v6l-4 3.500-4-3.500z" fill="#fff" stroke="#c4c4c4"/><path d="M2.500 4.5h4" stroke="#c4c4c4"/></svg>
<svg class="abs" style="left:441px;top:528.5px" width="9" height="10" viewBox="0 0 9 10"><path d="M.500 .500h8v6l-4 3.500-4-3.500z" fill="#fff" stroke="#c4c4c4"/><path d="M2.500 4.5h4" stroke="#c4c4c4"/></svg>
<svg class="abs" style="left:441px;top:612.5px" width="9" height="10" viewBox="0 0 9 10"><path d="M.500 .500h8v6l-4 3.500-4-3.500z" fill="#fff" stroke="#c4c4c4"/><path d="M2.500 4.5h4" stroke="#c4c4c4"/></svg>
<svg class="abs" style="left:441px;top:759.5px" width="9" height="10" viewBox="0 0 9 10"><path d="M.500 .500h8v6l-4 3.500-4-3.500z" fill="#fff" stroke="#c4c4c4"/><path d="M2.500 4.5h4" stroke="#c4c4c4"/></svg>
<svg class="abs" style="left:441px;top:843.5px" width="9" height="10" viewBox="0 0 9 10"><path d="M.500 .500h8v6l-4 3.500-4-3.500z" fill="#fff" stroke="#c4c4c4"/><path d="M2.500 4.5h4" stroke="#c4c4c4"/></svg>
<svg class="abs" style="left:441px;top:885.5px" width="9" height="10" viewBox="0 0 9 10"><path d="M.500 .500h8v6l-4 3.500-4-3.500z" fill="#fff" stroke="#c4c4c4"/><path d="M2.500 4.5h4" stroke="#c4c4c4"/></svg>
<svg class="abs" style="left:441px;top:150.5px" width="9" height="10" viewBox="0 0 9 10"><path d="M.500 9.500h8v-6l-4-3.500-4 3.500z" fill="#fff" stroke="#c4c4c4"/><path d="M2.500 5.5h4" stroke="#c4c4c4"/></svg>
<svg class="abs" style="left:441px;top:171.5px" width="9" height="10" viewBox="0 0 9 10"><path d="M.500 9.500h8v-6l-4-3.500-4 3.500z" fill="#fff" stroke="#c4c4c4"/><path d="M2.500 5.5h4" stroke="#c4c4c4"/></svg>
<svg class="abs" style="left:441px;top:192.5px" width="9" height="10" viewBox="0 0 9 10"><path d="M.500 9.500h8v-6l-4-3.500-4 3.500z" fill="#fff" stroke="#c4c4c4"/><path d="M2.500 5.5h4" stroke="#c4c4c4"/></svg>
<svg class="abs" style="left:441px;top:213.5px" width="9" height="10" viewBox="0 0 9 10"><path d="M.500 9.500h8v-6l-4-3.500-4 3.500z" fill="#fff" stroke="#c4c4c4"/><path d="M2.500 5.5h4" stroke="#c4c4c4"/></svg>
<svg class="abs" style="left:441px;top:360.5px" width="9" height="10" viewBox="0 0 9 10"><path d="M.500 9.500h8v-6l-4-3.500-4 3.500z" fill="#fff" stroke="#c4c4c4"/><path d="M2.500 5.5h4" stroke="#c4c4c4"/></svg>
<svg class="abs" style="left:441px;top:381.5px" width="9" height="10" viewBox="0 0 9 10"><path d="M.500 9.500h8v-6l-4-3.500-4 3.500z" fill="#fff" stroke="#c4c4c4"/><path d="M2.500 5.5h4" stroke="#c4c4c4"/></svg>
<svg class="abs" style="left:441px;top:402.5px" width="9" height="10" viewBox="0 0 9 10"><path d="M.500 9.500h8v-6l-4-3.500-4 3.500z" fill="#fff" stroke="#c4c4c4"/><path d="M2.500 5.5h4" stroke="#c4c4c4"/></svg>
<svg class="abs" style="left:441px;top:570.5px" width="9" height="10" viewBox="0 0 9 10"><path d="M.500 9.500h8v-6l-4-3.500-4 3.500z" fill="#fff" stroke="#c4c4c4"/><path d="M2.500 5.5h4" stroke="#c4c4c4"/></svg>
<svg class="abs" style="left:441px;top:591.5px" width="9" height="10" viewBox="0 0 9 10"><path d="M.500 9.500h8v-6l-4-3.500-4 3.500z" fill="#fff" stroke="#c4c4c4"/><path d="M2.500 5.5h4" stroke="#c4c4c4"/></svg>
<svg class="abs" style="left:441px;top:654.5px" width="9" height="10" viewBox="0 0 9 10"><path d="M.500 9.500h8v-6l-4-3.500-4 3.500z" fill="#fff" stroke="#c4c4c4"/><path d="M2.500 5.5h4" stroke="#c4c4c4"/></svg>
<svg class="abs" style="left:441px;top:675.5px" width="9" height="10" viewBox="0 0 9 10"><path d="M.500 9.500h8v-6l-4-3.500-4 3.500z" fill="#fff" stroke="#c4c4c4"/><path d="M2.500 5.5h4" stroke="#c4c4c4"/></svg>
<svg class="abs" style="left:414px;top:736px" width="14" height="14" viewBox="0 0 14 14"><circle cx="6" cy="6.500" r="5.500" fill="#62b543"/><path d="M3 4.500l2-1.500 1.500 1.500L5 7zM7 8l2.500-1 .5 2-1.500 1.500z" fill="#fff" opacity=".800"/><circle cx="10" cy="10" r="3.500" fill="#9aa7b0" stroke="#f2f2f2"/><circle cx="10" cy="10" r="1.200" fill="#f2f2f2"/></svg>
<svg class="abs" style="left:644px;top:715px" width="22" height="14" viewBox="0 0 22 14"><rect width="22" height="14" rx="3" fill="#f4f4f4"/><circle cx="6.500" cy="7" r="4.300" fill="#b9b9b9" stroke="#8f8f8f" stroke-width="1"/><path d="M3.500 5.500l2.500-2 1.500 1.500L6 7.500zM7 8.500l2.500-.7.300 1.500-1.600 1.200z" fill="#f4f4f4"/><path d="M13.500 5.500l2.500 2.500 2.500-2.500" fill="none" stroke="#8a8a8a" stroke-width="1.200"/></svg>
</div></div>
<div class="abs" style="left:381px;top:865px;width:1px;height:20px;background:#2675bf;"></div>
<div class="abs" style="left:451px;top:886px;width:1076px;height:10px;background:rgba(0,0,0,0.12);"></div>
<svg class="abs" style="left:1398px;top:92px" width="12" height="12" viewBox="0 0 12 12"><circle cx="6" cy="6" r="5" fill="#db5860"/><rect x="5.200" y="3" width="1.600" height="4" fill="#fff"/><rect x="5.200" y="8" width="1.600" height="1.500" fill="#fff"/></svg>
<div class="t " style="left:1413px;top:89px;color:#6e6e6e;font-size:12.500px;">117</div>
<svg class="abs" style="left:1441px;top:91px" width="14" height="13" viewBox="0 0 14 13"><path d="M7 1l6 11H1z" fill="#ecc400"/><rect x="6.300" y="5" width="1.400" height="3.500" fill="#fff"/><rect x="6.300" y="9.500" width="1.400" height="1.400" fill="#fff"/></svg>
<div class="t " style="left:1457px;top:89px;color:#6e6e6e;font-size:12.500px;">48</div>
<svg class="abs" style="left:1478px;top:91px" width="14" height="13" viewBox="0 0 14 13"><path d="M7 1l6 11H1z" fill="#d9cfa6"/><rect x="6.300" y="5" width="1.400" height="3.500" fill="#fff"/><rect x="6.300" y="9.500" width="1.400" height="1.400" fill="#fff"/></svg>
<div class="t " style="left:1494px;top:89px;color:#6e6e6e;font-size:12.500px;">10</div>
<svg class="abs" style="left:1514px;top:91px" width="14" height="15" viewBox="0 0 14 15" fill="none" stroke="#4fa660"><path d="M2.500 6.500l3 3L12 2.500" stroke-width="2.600"/><path d="M2 13l2-1.500 2 1.500 2-1.500 2 1.500 2-1.500" stroke-width="1.100"/></svg>
<div class="t " style="left:1531px;top:89px;color:#6e6e6e;font-size:12.500px;">6</div>
<svg class="abs" style="left:1548px;top:94px" width="10" height="7" viewBox="0 0 10 7" fill="none" stroke="#6e6e6e" stroke-width="1.300"><path d="M1 6l4-4 4 4"/></svg>
<svg class="abs" style="left:1569px;top:95px" width="10" height="7" viewBox="0 0 10 7" fill="none" stroke="#6e6e6e" stroke-width="1.300"><path d="M1 1l4 4 4-4"/></svg>
<div class="abs" style="left:1572px;top:111px;width:14px;height:2px;background:#ebc700;"></div>
<div class="abs" style="left:1572px;top:117px;width:14px;height:2px;background:#d35252;"></div>
<div class="abs" style="left:1572px;top:126px;width:14px;height:4px;background:#ebc700;"></div>
<div class="abs" style="left:1572px;top:144px;width:14px;height:21px;background:#dcd3a8;"></div>
<div class="abs" style="left:1572px;top:179px;width:14px;height:2px;background:#ebc700;"></div>
<div class="abs" style="left:1572px;top:184px;width:14px;height:2px;background:#d35252;"></div>
<div class="abs" style="left:1572px;top:189px;width:14px;height:2px;background:#ebc700;"></div>
<div class="abs" style="left:1572px;top:191px;width:14px;height:2px;background:#d35252;"></div>
<div class="abs" style="left:1572px;top:198px;width:14px;height:2px;background:#d35252;"></div>
<div class="abs" style="left:1572px;top:203px;width:14px;height:2px;background:#d35252;"></div>
<div class="abs" style="left:1572px;top:208px;width:14px;height:2px;background:#d35252;"></div>
<div class="abs" style="left:1572px;top:213px;width:14px;height:4px;background:#d35252;"></div>
<div class="abs" style="left:1572px;top:219px;width:14px;height:3px;background:#d35252;"></div>
<div class="abs" style="left:1572px;top:229px;width:14px;height:2px;background:#d35252;"></div>
<div class="abs" style="left:1572px;top:250px;width:14px;height:2px;background:#d35252;"></div>
<div class="abs" style="left:1572px;top:268px;width:14px;height:2px;background:#d35252;"></div>
<div class="abs" style="left:1572px;top:280px;width:14px;height:2px;background:#d35252;"></div>
<div class="abs" style="left:1572px;top:315px;width:14px;height:2px;background:#d35252;"></div>
<div class="abs" style="left:1572px;top:320px;width:14px;height:4px;background:#d35252;"></div>
<div class="abs" style="left:1572px;top:337px;width:14px;height:2px;background:#d35252;"></div>
<div class="abs" style="left:1572px;top:358px;width:14px;height:4px;background:#d35252;"></div>
<div class="abs" style="left:1572px;top:383px;width:14px;height:2px;background:#d35252;"></div>
<div class="abs" style="left:1572px;top:388px;width:14px;height:2px;background:#d35252;"></div>
<div class="abs" style="left:1572px;top:392px;width:14px;height:2px;background:#d35252;"></div>
<div class="abs" style="left:1572px;top:414px;width:14px;height:2px;background:#d35252;"></div>
<div class="abs" style="left:1572px;top:423px;width:14px;height:2px;background:#d35252;"></div>
<div class="abs" style="left:1572px;top:442px;width:14px;height:4px;background:#d35252;"></div>
<div class="abs" style="left:1572px;top:463px;width:14px;height:4px;background:#d35252;"></div>
<div class="abs" style="left:1572px;top:475px;width:14px;height:4px;background:#d35252;"></div>
<div class="abs" style="left:1572px;top:482px;width:14px;height:4px;background:#d35252;"></div>
<div class="abs" style="left:1572px;top:493px;width:14px;height:2px;background:#d35252;"></div>
<div class="abs" style="left:1572px;top:496px;width:14px;height:2px;background:#ebc700;"></div>
<div class="abs" style="left:1572px;top:502px;width:14px;height:2px;background:#d35252;"></div>
<div class="abs" style="left:1572px;top:507px;width:14px;height:4px;background:#d35252;"></div>
<div class="abs" style="left:1572px;top:512px;width:14px;height:4px;background:#d35252;"></div>
<div class="abs" style="left:1572px;top:536px;width:14px;height:2px;background:#ebc700;"></div>
<div class="abs" style="left:1572px;top:552px;width:14px;height:2px;background:#d35252;"></div>
<div class="abs" style="left:1572px;top:556px;width:14px;height:5px;background:#d35252;"></div>
<div class="abs" style="left:1572px;top:563px;width:14px;height:2px;background:#dcd3a8;"></div>
<div class="abs" style="left:1572px;top:568px;width:14px;height:2px;background:#ebc700;"></div>
<div class="abs" style="left:1572px;top:584px;width:14px;height:2px;background:#d35252;"></div>
<div class="abs" style="left:1572px;top:586px;width:14px;height:1px;background:#ebc700;"></div>
<div class="abs" style="left:1572px;top:591px;width:14px;height:5px;background:#d35252;"></div>
<div class="abs" style="left:1572px;top:603px;width:14px;height:2px;background:#d35252;"></div>
<div class="abs" style="left:1572px;top:606px;width:14px;height:2px;background:#ebc700;"></div>
<div class="abs" style="left:1572px;top:624px;width:14px;height:2px;background:#d35252;"></div>
<div class="abs" style="left:1572px;top:627px;width:14px;height:4px;background:#d35252;"></div>
<div class="abs" style="left:1572px;top:643px;width:14px;height:2px;background:#d35252;"></div>
<div class="abs" style="left:1572px;top:650px;width:14px;height:2px;background:#d35252;"></div>
<div class="abs" style="left:1572px;top:657px;width:14px;height:2px;background:#ebc700;"></div>
<div class="abs" style="left:1572px;top:673px;width:14px;height:2px;background:#dcd3a8;"></div>
<div class="abs" style="left:1572px;top:708px;width:14px;height:7px;background:#ebc700;"></div>
<div class="abs" style="left:1572px;top:718px;width:14px;height:4px;background:#ebc700;"></div>
<div class="abs" style="left:1572px;top:734px;width:14px;height:2px;background:#d35252;"></div>
<div class="abs" style="left:1572px;top:751px;width:14px;height:2px;background:#d35252;"></div>
<div class="abs" style="left:1572px;top:765px;width:14px;height:2px;background:#d35252;"></div>
<div class="abs" style="left:1572px;top:784px;width:14px;height:4px;background:#d35252;"></div>
<div class="abs" style="left:1572px;top:790px;width:14px;height:2px;background:#dcd3a8;"></div>
<div class="abs" style="left:1572px;top:795px;width:14px;height:2px;background:#ebc700;"></div>
<div class="abs" style="left:1572px;top:814px;width:14px;height:2px;background:#dcd3a8;"></div>
<div class="abs" style="left:1572px;top:842px;width:14px;height:4px;background:#d35252;"></div>
<div class="abs" style="left:1572px;top:859px;width:14px;height:2px;background:#ebc700;"></div>
<div class="abs" style="left:1572px;top:863px;width:14px;height:2px;background:#ebc700;"></div>
<div class="abs" style="left:1572px;top:866px;width:14px;height:6px;background:#d35252;"></div>
<div class="abs" style="left:1572px;top:873px;width:14px;height:2px;background:#d35252;"></div>
<div class="abs" style="left:1572px;top:144px;width:14px;height:2px;background:#d35252;"></div>
<div class="abs" style="left:1572px;top:148px;width:14px;height:2px;background:#d35252;"></div>
<div class="abs" style="left:1572px;top:152px;width:14px;height:2px;background:#d35252;"></div>
<div class="abs" style="left:1572px;top:156px;width:14px;height:2px;background:#d35252;"></div>
<div class="abs" style="left:1572px;top:160px;width:14px;height:2px;background:#d35252;"></div>
<div class="abs" style="left:1572px;top:164px;width:14px;height:2px;background:#d35252;"></div>
<div class="abs" style="left:1576px;top:252px;width:10px;height:65px;background:rgba(0,0,0,0.12);"></div>
<svg class="abs" style="left:1526px;top:35px" width="17" height="16" viewBox="0 0 17 16"><path d="M.870 6.440L6.300 1l3.700 .150l.200 .720L7.200 4.440l9 8L13.600 15L5.400 6L3.200 8.400z" fill="#59a869"/></svg>
<div class="abs" style="left:1554px;top:32px;width:135px;height:22px;background:#fff;border:1px solid #c4c4c4;border-radius:3px"></div>
<div class="t " style="left:1563px;top:34px;letter-spacing:0.110px;">Add Configuration...</div>
<svg class="abs" style="left:1699px;top:35px" width="16" height="16" viewBox="0 0 16 16"><path d="M11 2l3.500 3.500L11 9V6.500H8A3.500 3.500 0 004.500 10 3.500 3.500 0 008 13.500v2A5.500 5.500 0 012.500 10 5.500 5.500 0 018 4.500h3z" fill="#bcbcbc"/><rect x="10" y="11" width="4" height="4" fill="#bcbcbc"/></svg>
<svg class="abs" style="left:1725px;top:35px" width="16" height="16" viewBox="0 0 16 16" fill="#bcbcbc"><ellipse cx="8" cy="9.500" rx="3.800" ry="5"/><circle cx="8" cy="3.500" r="2.300"/><path d="M1 6.500h4v1.300H1zM11 6.500h4v1.300h-4zM1 9.500h3.500v1.300H1zM11.500 9.500H15v1.300h-3.500zM1.500 12.500h4v1.300h-4zM10.500 12.500h4v1.300h-4z"/></svg>
<svg class="abs" style="left:1751px;top:35px" width="16" height="16" viewBox="0 0 16 16" fill="#bcbcbc"><path d="M1 2h9v6.500L7 8v6L1 11z"/><path d="M9 8.500l6 3.500-6 3.500z"/></svg>
<svg class="abs" style="left:1775px;top:35px" width="17" height="16" viewBox="0 0 17 16"><circle cx="7.500" cy="7.500" r="5.500" fill="none" stroke="#bcbcbc" stroke-width="1.800"/><path d="M7.500 4.500v3.500l2 1" fill="none" stroke="#bcbcbc" stroke-width="1.300"/><rect x="9" y="7.500" width="8" height="9" fill="#f2f2f2"/><path d="M10.500 8.500l6 3.500-6 3.500z" fill="#bcbcbc"/></svg>
<svg class="abs" style="left:1798px;top:41px" width="8" height="4" viewBox="0 0 8 4"><path d="M0 0h8L4 4z" fill="#6e6e6e"/></svg>
<div class="abs" style="left:1817px;top:38px;width:10px;height:10px;background:#db5860;"></div>
<div class="abs" style="left:1838px;top:33px;width:1px;height:21px;background:#d1d1d1;"></div>
<svg class="abs" style="left:1847px;top:35px" width="17" height="16" viewBox="0 0 17 16"><path d="M1 2h5l1.500 2H14v8H1z" fill="#6e6e6e"/><rect x="8" y="8" width="8" height="8" fill="#f2f2f2"/><rect x="9" y="9" width="3" height="3" fill="#389fd6"/><rect x="13" y="9" width="3" height="3" fill="#389fd6"/><rect x="9" y="13" width="3" height="3" fill="#389fd6"/><rect x="13" y="13" width="3" height="3" fill="#389fd6"/></svg>
<div class="abs" style="left:1871px;top:33px;width:1px;height:21px;background:#d1d1d1;"></div>
<svg class="abs" style="left:1878px;top:35px" width="16" height="16" viewBox="0 0 16 16"><path d="M1 2h14v12H1z" fill="none" stroke="#6e6e6e" stroke-width="1.400"/><rect x="1" y="2" width="14" height="2.500" fill="#6e6e6e"/><path d="M4.500 6.500l5 3-5 3z" fill="#59a869"/></svg>
<svg class="abs" style="left:1901px;top:35px" width="16" height="16" viewBox="0 0 16 16" fill="none" stroke="#6e6e6e"><circle cx="6.500" cy="6.500" r="4.500" stroke-width="2"/><path d="M10 10l4.500 4.500" stroke-width="2.400"/></svg>
<div class="abs" style="left:1587px;top:58px;width:312px;height:26px;background:#f2f2f2;"></div>
<div class="abs" style="left:1587px;top:84px;width:312px;height:1px;background:#d1d1d1;"></div>
<div class="abs" style="left:1587px;top:85px;width:312px;height:28px;background:#f2f2f2;"></div>
<div class="abs" style="left:1587px;top:113px;width:312px;height:1px;background:#d1d1d1;"></div>
<div class="abs" style="left:1587px;top:114px;width:312px;height:782px;background:#fff;"></div>
<div class="t " style="left:1593px;top:62px;letter-spacing:0.242px;">Maven</div>
<svg class="abs" style="left:1852px;top:63px" width="16" height="16" viewBox="0 0 16 16"><path fill="#6e6e6e" fill-rule="evenodd" d="M6.900 1h2.200l.4 1.900 1.200.5 1.600-1.100 1.500 1.500-1.100 1.600.5 1.200 1.900.4v2.200l-1.900.4-.5 1.200 1.100 1.600-1.500 1.500-1.600-1.100-1.200.5-.4 1.900H6.900l-.4-1.900-1.200-.5-1.600 1.100-1.500-1.500 1.100-1.600-.5-1.200L1 9.100V6.900l1.900-.4.500-1.200-1.100-1.600 1.500-1.500 1.600 1.100 1.200-.5zM8 5.600a2.400 2.400 0 100 4.800 2.400 2.400 0 000-4.800z"/></svg>
<div class="abs" style="left:1880px;top:70px;width:12px;height:2px;background:#6e6e6e;"></div>
<svg class="abs" style="left:1594px;top:91px" width="16" height="16" viewBox="0 0 16 16" fill="none" stroke="#6e6e6e" stroke-width="1.600"><path d="M13 6.500A5.300 5.300 0 003.200 5.300M3 9.500a5.300 5.300 0 009.800 1.200"/><path d="M2.500 2v4h4zM13.500 14v-4h-4z" fill="#6e6e6e" stroke="none"/></svg>
<svg class="abs" style="left:1620px;top:91px" width="17" height="16" viewBox="0 0 17 16"><path d="M1 2h5l1.500 2H13v8H1z" fill="#6e6e6e"/><circle cx="12.500" cy="12" r="4.300" fill="#f2f2f2"/><path d="M15 11a2.700 2.700 0 00-5-.5M10 13a2.700 2.700 0 005 .5" fill="none" stroke="#6e6e6e" stroke-width="1.100"/></svg>
<svg class="abs" style="left:1646px;top:91px" width="18" height="16" viewBox="0 0 18 16" fill="#6e6e6e"><rect x="7.100" y="1" width="1.800" height="8"/><path d="M4 6h8l-4 4.500z"/><rect x="2" y="11.800" width="12" height="1.800"/><path d="M11 13h6l-3 3z" fill="#333"/></svg>
<div class="abs" style="left:1670px;top:89px;width:1px;height:20px;background:#d1d1d1;"></div>
<svg class="abs" style="left:1681px;top:93px" width="12" height="12" viewBox="0 0 12 12" fill="#6e6e6e"><rect x="5.200" y="1" width="1.600" height="10"/><rect x="1" y="5.200" width="10" height="1.600"/></svg>
<div class="abs" style="left:1703px;top:89px;width:1px;height:20px;background:#d1d1d1;"></div>
<svg class="abs" style="left:1715px;top:93px" width="12" height="12" viewBox="0 0 12 12"><path d="M1 0l10 6-10 6z" fill="#c4c4c4"/></svg>
<div class="t b" style="left:1738.5px;top:88px;color:#6e6e6e;font-style:italic;font-size:19px;letter-spacing:-1px">m</div>
<svg class="abs" style="left:1764px;top:91px" width="16" height="16" viewBox="0 0 16 16" fill="#6e6e6e"><rect x="1" y="6.800" width="4.500" height="2.400"/><rect x="10.500" y="6.800" width="4.500" height="2.400"/><path d="M6.300 2h2L5.700 14h-2zM10.300 2h2L9.700 14h-2z"/></svg>
<svg class="abs" style="left:1790px;top:91px" width="16" height="16" viewBox="0 0 16 16"><circle cx="8" cy="8" r="7.500" fill="#7fcdec"/><path d="M9.500 3L4.500 9h3l-1 4 5-6h-3z" fill="#2b5468"/></svg>
<svg class="abs" style="left:1816px;top:91px" width="16" height="16" viewBox="0 0 16 16"><rect x="1" y="1" width="14" height="2.200" fill="#9aa7b0"/><rect x="1" y="12.800" width="14" height="2.200" fill="#9aa7b0"/><path d="M4.500 4.500l2.300 3H2.200zM11.500 4.500l2.300 3H9.200z" fill="#389fd6"/><rect x="3.900" y="7" width="1.200" height="5" fill="#389fd6"/><rect x="10.900" y="7" width="1.200" height="1.500" fill="#389fd6"/><rect x="10.900" y="9.500" width="1.200" height="1.500" fill="#389fd6"/></svg>
<svg class="abs" style="left:1842px;top:91px" width="16" height="16" viewBox="0 0 16 16" fill="#6e6e6e"><rect x="2" y="7.200" width="12" height="1.700"/><path d="M8 5.300l3-2.800H5zM8 10.700l3 2.800H5z"/></svg>
<div class="abs" style="left:1866px;top:89px;width:1px;height:20px;background:#d1d1d1;"></div>
<svg class="abs" style="left:1874px;top:90px" width="19" height="18" viewBox="0 0 19 18" fill="#6e6e6e"><path d="M14.500 4.500l-2.500 2.500-2-2 2.500-2.500a4 4 0 00-5 5.200L2 13.200 4.300 15.500l5.500-5.500a4 4 0 005.200-5z"/><path d="M12.500 14h5.500l-2.750 3z" fill="#333"/></svg>
<svg class="abs" style="left:1595px;top:119px" width="7" height="11" viewBox="0 0 7 11" fill="none" stroke="#7a7a7a" stroke-width="1.200"><path d="M1.300 1.500l4 4L1.300 9.500"/></svg>
<svg class="abs" style="left:1613.500px;top:118px" width="16" height="16" viewBox="0 0 16 16"><path d="M5.500 0h5v8H3.500v6H.500V5.500h5z" fill="#aeb9c0"/><path d="M4.500 0v4.500H.500z" fill="#aeb9c0" opacity=".700"/></svg>
<div class="t b" style="left:1617.5px;top:119.5px;color:#40b0e0;font-style:italic;font-size:11px;letter-spacing:-.5px">m</div>
<div class="t " style="left:1629.5px;top:115px;letter-spacing:0.098px;">jeecms-admin</div>
<svg class="abs" style="left:1595px;top:139px" width="7" height="11" viewBox="0 0 7 11" fill="none" stroke="#7a7a7a" stroke-width="1.200"><path d="M1.300 1.500l4 4L1.300 9.500"/></svg>
<svg class="abs" style="left:1613.500px;top:138px" width="16" height="16" viewBox="0 0 16 16"><path d="M5.500 0h5v8H3.500v6H.500V5.500h5z" fill="#aeb9c0"/><path d="M4.500 0v4.500H.500z" fill="#aeb9c0" opacity=".700"/></svg>
<div class="t b" style="left:1617.5px;top:139.5px;color:#40b0e0;font-style:italic;font-size:11px;letter-spacing:-.5px">m</div>
<div class="t " style="left:1629.5px;top:135px;letter-spacing:0.153px;">jeecms-common</div>
<svg class="abs" style="left:1595px;top:159px" width="7" height="11" viewBox="0 0 7 11" fill="none" stroke="#7a7a7a" stroke-width="1.200"><path d="M1.300 1.500l4 4L1.300 9.500"/></svg>
<svg class="abs" style="left:1613.500px;top:158px" width="16" height="16" viewBox="0 0 16 16"><path d="M5.500 0h5v8H3.500v6H.500V5.500h5z" fill="#aeb9c0"/><path d="M4.500 0v4.500H.500z" fill="#aeb9c0" opacity=".700"/></svg>
<div class="t b" style="left:1617.5px;top:159.5px;color:#40b0e0;font-style:italic;font-size:11px;letter-spacing:-.5px">m</div>
<div class="t " style="left:1629.5px;top:155px;letter-spacing:0.171px;">jeecms-component</div>
<svg class="abs" style="left:1595px;top:179px" width="7" height="11" viewBox="0 0 7 11" fill="none" stroke="#7a7a7a" stroke-width="1.200"><path d="M1.300 1.500l4 4L1.300 9.500"/></svg>
<svg class="abs" style="left:1613.500px;top:178px" width="16" height="16" viewBox="0 0 16 16"><path d="M5.500 0h5v8H3.500v6H.500V5.500h5z" fill="#aeb9c0"/><path d="M4.500 0v4.500H.500z" fill="#aeb9c0" opacity=".700"/></svg>
<div class="t b" style="left:1617.5px;top:179.5px;color:#40b0e0;font-style:italic;font-size:11px;letter-spacing:-.5px">m</div>
<div class="t " style="left:1629.5px;top:175px;letter-spacing:0.268px;">jeecms-form</div>
<div class="abs" style="left:1587px;top:195px;width:312px;height:20px;background:#d5d5d5;"></div>
<svg class="abs" style="left:1595px;top:199px" width="7" height="11" viewBox="0 0 7 11" fill="none" stroke="#7a7a7a" stroke-width="1.200"><path d="M1.300 1.500l4 4L1.300 9.500"/></svg>
<svg class="abs" style="left:1613.500px;top:198px" width="16" height="16" viewBox="0 0 16 16"><path d="M5.500 0h5v8H3.500v6H.500V5.500h5z" fill="#aeb9c0"/><path d="M4.500 0v4.500H.500z" fill="#aeb9c0" opacity=".700"/></svg>
<div class="t b" style="left:1617.5px;top:199.5px;color:#40b0e0;font-style:italic;font-size:11px;letter-spacing:-.5px">m</div>
<div class="t " style="left:1629.5px;top:195px;letter-spacing:0.261px;">jeecms-front</div>
<svg class="abs" style="left:1595px;top:219px" width="7" height="11" viewBox="0 0 7 11" fill="none" stroke="#7a7a7a" stroke-width="1.200"><path d="M1.300 1.500l4 4L1.300 9.500"/></svg>
<svg class="abs" style="left:1613.500px;top:218px" width="16" height="16" viewBox="0 0 16 16"><path d="M5.500 0h5v8H3.500v6H.500V5.500h5z" fill="#aeb9c0"/><path d="M4.500 0v4.500H.500z" fill="#aeb9c0" opacity=".700"/></svg>
<div class="t b" style="left:1617.5px;top:219.5px;color:#40b0e0;font-style:italic;font-size:11px;letter-spacing:-.5px">m</div>
<div class="t " style="left:1629.5px;top:215px;letter-spacing:-0.069px;">jeecms-lucene</div>
<svg class="abs" style="left:1595px;top:239px" width="7" height="11" viewBox="0 0 7 11" fill="none" stroke="#7a7a7a" stroke-width="1.200"><path d="M1.300 1.500l4 4L1.300 9.500"/></svg>
<svg class="abs" style="left:1613.500px;top:238px" width="16" height="16" viewBox="0 0 16 16"><path d="M5.500 0h5v8H3.500v6H.500V5.500h5z" fill="#aeb9c0"/><path d="M4.500 0v4.500H.500z" fill="#aeb9c0" opacity=".700"/></svg>
<div class="t b" style="left:1617.5px;top:239.5px;color:#40b0e0;font-style:italic;font-size:11px;letter-spacing:-.5px">m</div>
<div class="t " style="left:1629.5px;top:235px;letter-spacing:0.189px;">jeecms-mq-thread</div>
<svg class="abs" style="left:1595px;top:259px" width="7" height="11" viewBox="0 0 7 11" fill="none" stroke="#7a7a7a" stroke-width="1.200"><path d="M1.300 1.500l4 4L1.300 9.500"/></svg>
<svg class="abs" style="left:1613.500px;top:258px" width="16" height="16" viewBox="0 0 16 16"><path d="M5.500 0h5v8H3.500v6H.500V5.500h5z" fill="#aeb9c0"/><path d="M4.500 0v4.500H.500z" fill="#aeb9c0" opacity=".700"/></svg>
<div class="t b" style="left:1617.5px;top:259.5px;color:#40b0e0;font-style:italic;font-size:11px;letter-spacing:-.5px">m</div>
<div class="t " style="left:1629.5px;top:255px;letter-spacing:.200px;">jeecms-parent <span style="color:#8a8a8a">(root)</span></div>
<div class="abs" style="left:1900px;top:58px;width:20px;height:851px;background:#f2f2f2;"></div>
<div class="abs" style="left:1899px;top:58px;width:1px;height:851px;background:#d4d4d4;"></div>
<div class="abs" style="left:1899px;top:135px;width:21px;height:73px;background:#bdbdbd;"></div>
<div class="abs" style="left:1918.500px;top:65px;width:0;height:0"><div style="position:absolute;white-space:pre;transform:rotate(90deg);transform-origin:0 0;left:0;top:0;width:80px;height:20px;line-height:20px;font-size:12px;letter-spacing:-.400px">Json Parser</div></div>
<div class="t b" style="left:1904px;top:141px;color:#7a7a7a;font-style:italic;font-size:16px">m</div>
<div class="abs" style="left:1918.500px;top:163px;width:0;height:0"><div style="position:absolute;white-space:pre;transform:rotate(90deg);transform-origin:0 0;left:0;top:0;width:80px;height:20px;line-height:20px;font-size:12px;">Maven</div></div>
<svg class="abs" style="left:1904px;top:219px" width="11" height="12" viewBox="0 0 11 12" fill="#6e6e6e"><rect x="0" y="1" width="2.200" height="10" rx="1"/><rect x="2.900" y="0" width="2.200" height="12" rx="1"/><rect x="5.800" y="0" width="2.200" height="12" rx="1"/><rect x="8.700" y="1" width="2.200" height="10" rx="1"/></svg>
<div class="abs" style="left:1918.500px;top:235px;width:0;height:0"><div style="position:absolute;white-space:pre;transform:rotate(90deg);transform-origin:0 0;left:0;top:0;width:80px;height:20px;line-height:20px;font-size:12px;letter-spacing:-.200px">Database</div></div>
<svg class="abs" style="left:1905px;top:305px" width="11" height="12" viewBox="0 0 11 12" fill="#6e6e6e"><rect x="3.500" y="0" width="4" height="4"/><rect x="0" y="8" width="4" height="4"/><rect x="7" y="8" width="4" height="4"/><path d="M5 4h1v2h3.500v2h-1V7H2.500v1h-1V6H5z"/></svg>
<div class="abs" style="left:1918.500px;top:321px;width:0;height:0"><div style="position:absolute;white-space:pre;transform:rotate(90deg);transform-origin:0 0;left:0;top:0;width:80px;height:20px;line-height:20px;font-size:12px;">Hierarchy</div></div>
<div class="t " style="left:28px;top:901.5px;">Run:</div>
<div class="t " style="left:92px;top:901.5px;">CmsFrontApplication</div>
<svg class="abs" style="left:74px;top:904.500px" width="12" height="12" viewBox="0 0 12 12"><path d="M0 12L12 0v12z" fill="#59a869"/></svg>
<svg class="abs" style="left:218px;top:907.500px" width="8" height="8" viewBox="0 0 8 8" stroke="#a8a8a8" stroke-width="1"><path d="M.500 .500l7 7M7.500 .500l-7 7"/></svg>
<svg class="abs" style="left:1852px;top:902px" width="16" height="16" viewBox="0 0 16 16"><path fill="#6e6e6e" fill-rule="evenodd" d="M6.900 1h2.200l.4 1.900 1.200.5 1.600-1.100 1.500 1.500-1.100 1.600.5 1.200 1.900.4v2.200l-1.900.4-.5 1.200 1.100 1.600-1.500 1.500-1.600-1.100-1.200.5-.4 1.900H6.900l-.4-1.900-1.200-.5-1.600 1.100-1.500-1.500 1.100-1.600-.5-1.200L1 9.100V6.900l1.900-.4.500-1.200-1.100-1.600 1.500-1.500 1.600 1.100 1.200-.5zM8 5.600a2.400 2.400 0 100 4.800 2.400 2.400 0 000-4.800z"/></svg></body></html>
